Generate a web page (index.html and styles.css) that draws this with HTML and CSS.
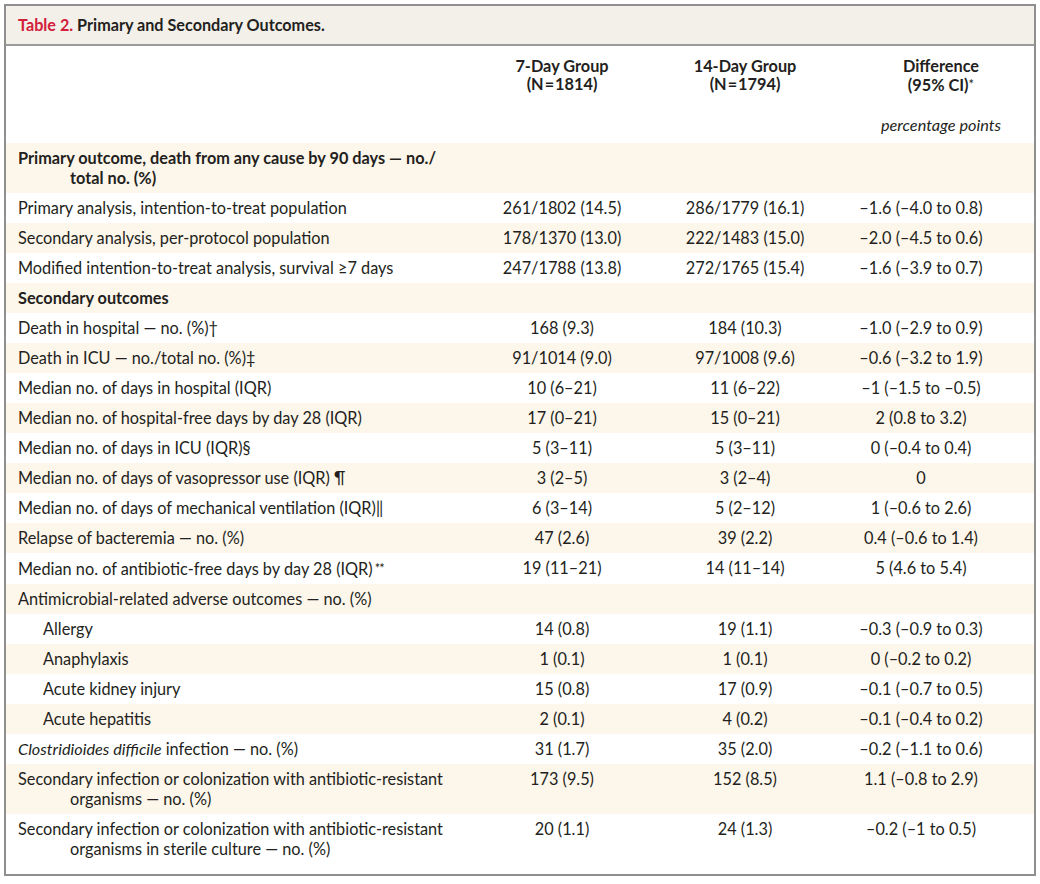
FILE: index.html
```html
<!DOCTYPE html>
<html>
<head>
<meta charset="utf-8">
<link rel="stylesheet" href="styles.css">
</head>
<body>
<div class="box">
  <div class="title"><span class="tnum">Table 2.</span> Primary and Secondary Outcomes.</div>
  <table class="tbl">
    <colgroup>
      <col class="c-label"><col class="c-g1"><col class="c-g2"><col class="c-diff">
    </colgroup>
    <thead>
      <tr class="hrow">
        <th></th>
        <th>7-Day Group<br>(N&#8202;=&#8202;1814)</th>
        <th>14-Day Group<br>(N&#8202;=&#8202;1794)</th>
        <th class="hdiff">Difference<br>(95% CI)<span class="sym">*</span></th>
      </tr>
      <tr class="urow">
        <th></th><th></th><th></th>
        <th class="hdiff"><i>percentage points</i></th>
      </tr>
    </thead>
    <tbody>
      <tr class="alt"><td class="lbl bold hang">Primary outcome, death from any cause by 90 days — no./<br>total no. (%)</td><td></td><td></td><td></td></tr>
      <tr><td class="lbl">Primary analysis, intention-to-treat population</td><td>261/1802 (14.5)</td><td>286/1779 (16.1)</td><td class="d">–1.6 (–4.0 to 0.8)</td></tr>
      <tr class="alt"><td class="lbl">Secondary analysis, per-protocol population</td><td>178/1370 (13.0)</td><td>222/1483 (15.0)</td><td class="d">–2.0 (–4.5 to 0.6)</td></tr>
      <tr><td class="lbl">Modified intention-to-treat analysis, survival ≥7 days</td><td>247/1788 (13.8)</td><td>272/1765 (15.4)</td><td class="d">–1.6 (–3.9 to 0.7)</td></tr>
      <tr class="alt"><td class="lbl bold">Secondary outcomes</td><td></td><td></td><td></td></tr>
      <tr><td class="lbl">Death in hospital — no. (%)†</td><td>168 (9.3)</td><td>184 (10.3)</td><td class="d">–1.0 (–2.9 to 0.9)</td></tr>
      <tr class="alt"><td class="lbl">Death in ICU — no./total no. (%)‡</td><td>91/1014 (9.0)</td><td>97/1008 (9.6)</td><td class="d">–0.6 (–3.2 to 1.9)</td></tr>
      <tr><td class="lbl">Median no. of days in hospital (IQR)</td><td>10 (6–21)</td><td>11 (6–22)</td><td class="d">–1 (–1.5 to –0.5)</td></tr>
      <tr class="alt"><td class="lbl">Median no. of hospital-free days by day 28 (IQR)</td><td>17 (0–21)</td><td>15 (0–21)</td><td class="d">2 (0.8 to 3.2)</td></tr>
      <tr><td class="lbl">Median no. of days in ICU (IQR)§</td><td>5 (3–11)</td><td>5 (3–11)</td><td class="d">0 (–0.4 to 0.4)</td></tr>
      <tr class="alt"><td class="lbl">Median no. of days of vasopressor use (IQR) ¶</td><td>3 (2–5)</td><td>3 (2–4)</td><td class="d">0</td></tr>
      <tr><td class="lbl">Median no. of days of mechanical ventilation (IQR)‖</td><td>6 (3–14)</td><td>5 (2–12)</td><td class="d">1 (–0.6 to 2.6)</td></tr>
      <tr class="alt"><td class="lbl">Relapse of bacteremia — no. (%)</td><td>47 (2.6)</td><td>39 (2.2)</td><td class="d">0.4 (–0.6 to 1.4)</td></tr>
      <tr><td class="lbl">Median no. of antibiotic-free days by day 28 (IQR)<span class="sym2">**</span></td><td>19 (11–21)</td><td>14 (11–14)</td><td class="d">5 (4.6 to 5.4)</td></tr>
      <tr class="alt"><td class="lbl">Antimicrobial-related adverse outcomes — no. (%)</td><td></td><td></td><td></td></tr>
      <tr><td class="lbl sub">Allergy</td><td>14 (0.8)</td><td>19 (1.1)</td><td class="d">–0.3 (–0.9 to 0.3)</td></tr>
      <tr class="alt"><td class="lbl sub">Anaphylaxis</td><td>1 (0.1)</td><td>1 (0.1)</td><td class="d">0 (–0.2 to 0.2)</td></tr>
      <tr><td class="lbl sub">Acute kidney injury</td><td>15 (0.8)</td><td>17 (0.9)</td><td class="d">–0.1 (–0.7 to 0.5)</td></tr>
      <tr class="alt"><td class="lbl sub">Acute hepatitis</td><td>2 (0.1)</td><td>4 (0.2)</td><td class="d">–0.1 (–0.4 to 0.2)</td></tr>
      <tr><td class="lbl"><i>Clostridioides difficile</i> infection — no. (%)</td><td>31 (1.7)</td><td>35 (2.0)</td><td class="d">–0.2 (–1.1 to 0.6)</td></tr>
      <tr class="alt"><td class="lbl hang">Secondary infection or colonization with antibiotic-resistant<br>organisms — no. (%)</td><td>173 (9.5)</td><td>152 (8.5)</td><td class="d">1.1 (–0.8 to 2.9)</td></tr>
      <tr class="last"><td class="lbl hang">Secondary infection or colonization with antibiotic-resistant<br>organisms in sterile culture — no. (%)</td><td>20 (1.1)</td><td>24 (1.3)</td><td class="d">–0.2 (–1 to 0.5)</td></tr>
    </tbody>
  </table>
</div>
</body>
</html>
```
FILE: styles.css
```css
html, body {
  margin: 0;
  padding: 0;
  background: #ffffff;
}
body {
  font-family: Lato, "Open Sans", "Liberation Sans", sans-serif;
  font-size: 16.3px;
  color: #231f20;
}
.box {
  margin: 4px 0 0 4px;
  width: 1028px;
  border: 2px solid #8f8f8f;
  background: #ffffff;
}
.title {
  height: 38px;
  line-height: 38px;
  background: #f3f0ea;
  border-bottom: 2px solid #9a9a9a;
  padding-left: 12px;
  font-weight: 700;
  font-size: 16.2px;
  color: #231f20;
}
.tnum {
  color: #d2203a;
}
.tbl {
  width: 1028px;
  border-collapse: collapse;
  table-layout: fixed;
}
.c-label { width: 464px; }
.c-g1 { width: 184px; }
.c-g2 { width: 182px; }
.c-diff { width: 198px; }

.tbl th {
  font-weight: 700;
  text-align: center;
  line-height: 18px;
  vertical-align: top;
  padding: 0;
}
.hrow th {
  padding-top: 11px;
}
.urow th {
  padding-top: 22px;
  padding-bottom: 9px;
  font-weight: 400;
}
.urow i {
  font-style: italic;
}
.hdiff {
  padding-left: 12px !important;
}
.sym {
  font-size: 13px;
  vertical-align: 2px;
  font-weight: 400;
}
.sym2 {
  font-size: 13px;
  vertical-align: 2px;
  letter-spacing: -1px;
  padding-left: 2px;
}
.tbl td {
  padding: 5px 0;
  line-height: 20px;
  text-align: center;
  vertical-align: top;
}
.tbl td.d {
  padding-right: 28px;
}
.tbl td.lbl {
  text-align: left;
  padding-left: 12px;
  white-space: nowrap;
}
.tbl td.hang {
  padding-left: 64px;
  text-indent: -52px;
}
.tbl td.sub {
  padding-left: 37px;
}
.bold {
  font-weight: 700;
}
.alt td {
  background: #fdf6eb;
}
.last td {
  padding-bottom: 15px;
}
```
